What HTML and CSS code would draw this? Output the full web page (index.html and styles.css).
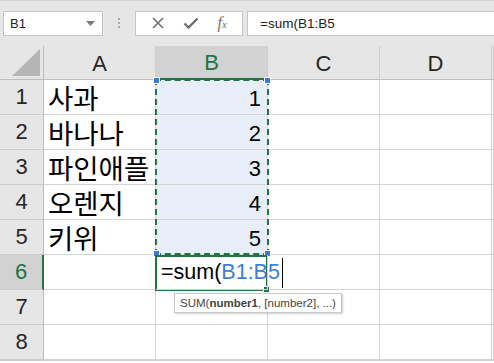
FILE: index.html
```html
<!DOCTYPE html>
<html lang="ko">
<head>
    <meta charset="UTF-8">
    <title>SUM</title>
    <link rel="stylesheet" href="styles.css">
</head>
<body>
    <div class="toolbar">
        <div class="namebox">
            <span>B1</span>
            <svg class="caret" width="9" height="5" viewBox="0 0 9 5"><path d="M0 0h9L4.5 5z" fill="#7a7a7a"/></svg>
        </div>
        <div class="grip"><i></i><i></i><i></i></div>
        <div class="fx-buttons">
            <svg width="14" height="14" viewBox="0 0 14 14"><path d="M2 2l10 10M12 2L2 12" stroke="#6f6f6f" stroke-width="1.6" fill="none"/></svg>
            <svg width="16" height="14" viewBox="0 0 16 14"><path d="M1.5 7.5l4 4L14.5 2.5" stroke="#6f6f6f" stroke-width="2.4" fill="none"/></svg>
            <span class="fx">f<sub>x</sub></span>
        </div>
        <div class="formula">=sum(B1:B5</div>
    </div>

    <div class="sheet">
        <div class="grid">
            <div class="corner"><svg width="28" height="27" viewBox="0 0 28 27"><path d="M28 0V27H0z" fill="#b5b5b5"/></svg></div>
            <div class="colhead">A</div>
            <div class="colhead active">B</div>
            <div class="colhead">C</div>
            <div class="colhead">D</div>
            <div class="colhead"></div>

            <div class="rowhead">1</div>
            <div class="cell text">사과</div>
            <div class="cell num sel">1</div>
            <div class="cell"></div><div class="cell"></div><div class="cell"></div>

            <div class="rowhead">2</div>
            <div class="cell text">바나나</div>
            <div class="cell num sel">2</div>
            <div class="cell"></div><div class="cell"></div><div class="cell"></div>

            <div class="rowhead">3</div>
            <div class="cell text">파인애플</div>
            <div class="cell num sel">3</div>
            <div class="cell"></div><div class="cell"></div><div class="cell"></div>

            <div class="rowhead">4</div>
            <div class="cell text">오렌지</div>
            <div class="cell num sel">4</div>
            <div class="cell"></div><div class="cell"></div><div class="cell"></div>

            <div class="rowhead">5</div>
            <div class="cell text">키위</div>
            <div class="cell num sel">5</div>
            <div class="cell"></div><div class="cell"></div><div class="cell"></div>

            <div class="rowhead active">6</div>
            <div class="cell"></div>
            <div class="cell edit"><span>=sum(<span class="ref">B1:B5</span><i class="cursor"></i></span></div>
            <div class="cell"></div><div class="cell"></div><div class="cell"></div>

            <div class="rowhead">7</div>
            <div class="cell"></div><div class="cell"></div><div class="cell"></div><div class="cell"></div><div class="cell"></div>

            <div class="rowhead">8</div>
            <div class="cell"></div><div class="cell"></div><div class="cell"></div><div class="cell"></div><div class="cell"></div>

            <div class="rowhead"></div>
            <div class="cell"></div><div class="cell"></div><div class="cell"></div><div class="cell"></div><div class="cell"></div>
        </div>

        <!-- copy range B1:B5 -->
        <div class="marquee">
            <b class="h tl"></b><b class="h tr"></b><b class="h bl"></b><b class="h br"></b>
        </div>
        <div class="active-cell"><b class="fill"></b></div>
        <div class="tip">SUM(<b>number1</b>, [number2], ...)</div>
    </div>
</body>
</html>
```

FILE: styles.css
```css
body {
    margin: 0;
    background: #fff;
    font-family: 'Liberation Sans', Arial, sans-serif;
    color: #000;
    overflow: hidden;
}

.toolbar {
    height: 46px;
    border-top: 1px solid #d4d4d4;
    background: #e6e6e6;
    display: flex;
    align-items: center;
    padding-left: 3px;
    box-sizing: border-box;
    padding-bottom: 1px;
}

.namebox {
    width: 100px;
    height: 25px;
    box-sizing: border-box;
    background: #fff;
    border: 1px solid #c6c6c6;
    display: flex;
    align-items: center;
    justify-content: space-between;
    padding: 0 7px 0 6px;
    font-size: 13px;
    color: #222;
}

.grip {
    width: 32px;
    display: flex;
    flex-direction: column;
    align-items: center;
    gap: 2px;
}

.grip i {
    width: 2px;
    height: 2px;
    background: #a8a8a8;
}

.fx-buttons {
    width: 108px;
    height: 25px;
    box-sizing: border-box;
    background: #fff;
    border: 1px solid #c6c6c6;
    display: flex;
    align-items: center;
    justify-content: space-around;
    padding: 0 6px;
}

.fx {
    font-family: 'Liberation Serif', serif;
    font-style: italic;
    font-size: 16px;
    color: #6f6f6f;
}

.fx sub {
    font-size: 11px;
    vertical-align: 0;
}

.formula {
    flex: 1;
    margin-left: 4px;
    height: 25px;
    box-sizing: border-box;
    background: #fff;
    border: 1px solid #c6c6c6;
    border-right: none;
    padding-left: 12px;
    line-height: 23px;
    font-size: 13.5px;
    color: #222;
}

.sheet {
    position: relative;
}

.grid {
    display: grid;
    grid-template-columns: 44px repeat(4, 112px) 1fr;
    grid-template-rows: 34px repeat(8, 35px) 1px;
    overflow: hidden;
}

.corner, .colhead, .rowhead {
    background: #e6e6e6;
    box-sizing: border-box;
    color: #262626;
    font-size: 22px;
    display: flex;
    align-items: center;
    justify-content: center;
}

.corner {
    border-right: 1px solid #bdbdbd;
    border-bottom: 1px solid #bdbdbd;
    align-items: flex-end;
    justify-content: flex-end;
    padding: 0 3px 3px 0;
}

.colhead {
    border-right: 1px solid #cdcdcd;
    border-bottom: 1px solid #bdbdbd;
    padding-top: 2px;
}

.colhead.active {
    background: #d2d2d2;
    color: #217346;
    border-bottom: 2px solid #217346;
}

.rowhead {
    border-right: 1px solid #bdbdbd;
    border-bottom: 1px solid #cdcdcd;
}

.rowhead.active {
    background: #d2d2d2;
    color: #217346;
    border-right: 2px solid #217346;
}

.cell {
    box-sizing: border-box;
    border-right: 1px solid #d4d4d4;
    border-bottom: 1px solid #d4d4d4;
    display: flex;
    align-items: center;
    white-space: nowrap;
}

.cell.text {
    font-family: 'Noto Sans CJK KR', 'Liberation Sans', sans-serif;
    font-size: 27.5px;
    line-height: 1;
    padding-left: 4px;
    padding-top: 1px;
}

.cell.num {
    justify-content: flex-end;
    font-size: 22px;
    padding-right: 6px;
    padding-top: 3px;
}

.cell.sel {
    background: #e7eef8;
}

.cell.edit {
    font-size: 21.5px;
    padding-left: 5px;
    padding-top: 2px;
    overflow: visible;
    position: relative;
    z-index: 1;
}

.ref {
    color: #3d7fd6;
}

.cursor {
    display: inline-block;
    width: 1px;
    height: 30px;
    margin-left: 2px;
    background: #000;
    vertical-align: middle;
}

.marquee {
    position: absolute;
    left: 155px;
    top: 33px;
    width: 114px;
    height: 176px;
    box-sizing: border-box;
    border: 2px dashed #217346;
}

.h {
    position: absolute;
    width: 5px;
    height: 5px;
    background: #3b78d8;
    border: 1px solid #fff;
}

.tl { left: -4px; top: -4px; }
.tr { right: -4px; top: -4px; }
.bl { left: -4px; bottom: -4px; }
.br { right: -4px; bottom: -4px; }

.active-cell {
    position: absolute;
    left: 155px;
    top: 209px;
    width: 113px;
    height: 36px;
    box-sizing: border-box;
    border: 2px solid #217346;
}

.fill {
    position: absolute;
    right: -4px;
    bottom: -4px;
    width: 5px;
    height: 5px;
    background: #217346;
    border: 1px solid #fff;
}

.tip {
    position: absolute;
    left: 174px;
    top: 247px;
    height: 18px;
    padding: 0 5px;
    background: #fff;
    border: 1px solid #c8c8c8;
    box-shadow: 1px 1px 2px rgba(0, 0, 0, 0.2);
    font-size: 11.5px;
    line-height: 18px;
    color: #444;
    white-space: nowrap;
    z-index: 2;
}
```
